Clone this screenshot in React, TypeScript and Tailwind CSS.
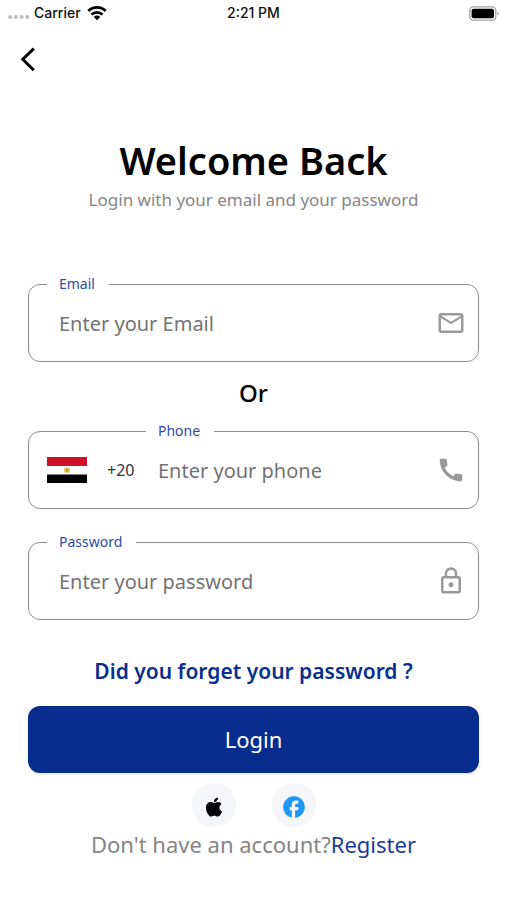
import type { ReactNode } from "react";
import { FaApple } from "react-icons/fa";
import { MdCall, MdFacebook, MdLockOutline, MdMailOutline } from "react-icons/md";

function StatusBar() {
  return (
    <header className="grid h-[26px] grid-cols-3 items-center px-2 font-['Inter',sans-serif] text-sm font-medium text-[#111111]">
      <div className="flex items-center gap-1">
        <svg viewBox="0 0 22 14" className="h-[14px] w-[22px] fill-[#bdbdbd]" aria-hidden="true">
          <circle cx="2.2" cy="11" r="2" />
          <circle cx="7.9" cy="11" r="2" />
          <circle cx="13.6" cy="11" r="2" />
          <circle cx="19.3" cy="11" r="2" />
        </svg>
        <span>Carrier</span>
        <svg viewBox="0 0 20 16" className="ml-0.5 h-4 w-5" fill="none" stroke="#000" strokeWidth="2.7" aria-hidden="true">
          <path d="M1.3 6a12.3 12.3 0 0 1 17.4 0" />
          <path d="M4.5 9.6a7.7 7.7 0 0 1 11 0" />
          <path d="M6.8 12a4.4 4.4 0 0 1 6.4 0L10 15.2Z" fill="#000" stroke="none" />
        </svg>
      </div>
      <span className="text-center">2:21 PM</span>
      <svg viewBox="0 0 30 15" className="h-[15px] w-[30px] justify-self-end" aria-label="Battery full">
        <rect x="0.8" y="0.8" width="26" height="13.4" rx="3.6" fill="none" stroke="#a3a3a3" strokeWidth="1.3" />
        <rect x="2.6" y="2.8" width="22.4" height="9.4" rx="2" />
        <path d="M28.4 5.4v4.2q1.3-.6 1.3-2.1t-1.3-2.1Z" fill="#999" />
      </svg>
    </header>
  );
}

function EgyptFlag() {
  return (
    <svg viewBox="0 0 40 26" className="h-[26px] w-10 shrink-0" aria-label="Egypt">
      <rect width="40" height="26" fill="#fff" />
      <rect width="40" height="9" fill="#ce1126" />
      <rect y="17.5" width="40" height="8.5" fill="#000" />
      <path d="M17 10.8h2l1-.6 1 .6h2v4l-1.4 1h-3.2l-1.4-1Z" fill="#e3c56c" />
      <path d="M19 12h2v2.4h-2Z" fill="#c09300" />
    </svg>
  );
}

type FieldProps = {
  id: string;
  label: string;
  type: string;
  placeholder: string;
  icon: ReactNode;
  prefix?: ReactNode;
};

function Field({ id, label, type, placeholder, icon, prefix }: FieldProps) {
  return (
    <fieldset className="min-w-0 rounded-xl border border-[#8c8c8c] pr-3 pb-[7px] pl-[18px]">
      <legend className={`h-4 pr-[14px] pl-3 text-sm leading-4 text-[#2f4ba5] ${prefix ? "ml-[99px]" : ""}`}>
        <label htmlFor={id}>{label}</label>
      </legend>
      <div className="flex h-[62px] items-center">
        {prefix}
        <input
          id={id}
          type={type}
          placeholder={placeholder}
          className={`h-full min-w-0 flex-1 bg-transparent text-xl text-[#222222] outline-none placeholder:text-[#737373] ${prefix ? "pl-5" : "pl-3"}`}
        />
        <span className="text-[30px] text-[#999999]">{icon}</span>
      </div>
    </fieldset>
  );
}

export default function App() {
  return (
    <div className="min-h-screen bg-white font-['Noto_Sans',sans-serif]">
      <StatusBar />
      <nav className="flex h-[66px] items-center px-4">
        <button type="button" aria-label="Back">
          <svg viewBox="0 0 24 26" className="h-[26px] w-6" fill="none" stroke="#000" strokeWidth="3">
            <path d="M17.8 2.6 6.8 13.2l11 11" />
          </svg>
        </button>
      </nav>
      <main className="px-7 pt-11">
        <h1 className="text-center text-[38px] leading-12 font-semibold text-black">Welcome Back</h1>
        <p className="mt-1 text-center text-[17px] leading-6 text-[#858585]">Login with your email and your password</p>

        <form onSubmit={(event) => event.preventDefault()}>
          <div className="mt-16">
            <Field id="email" label="Email" type="email" placeholder="Enter your Email" icon={<MdMailOutline />} />
          </div>
          <p className="mt-[15px] mb-[14px] text-center text-2xl font-medium text-black">Or</p>
          <Field
            id="phone"
            label="Phone"
            type="tel"
            placeholder="Enter your phone"
            icon={<MdCall />}
            prefix={
              <>
                <EgyptFlag />
                <span className="w-[51px] pl-5 text-base text-[#333333]">+20</span>
              </>
            }
          />
          <div className="mt-[25px]">
            <Field id="password" label="Password" type="password" placeholder="Enter your password" icon={<MdLockOutline />} />
          </div>
          <a href="#forgot" className="mx-auto mt-[35px] block w-fit text-[21px] leading-8 font-semibold text-[#0a2f8f]">
            Did you forget your password ?
          </a>
          <button
            type="submit"
            className="mt-[19px] h-[67px] w-full rounded-xl bg-[#062d8e] text-[22px] text-white shadow-sm"
          >
            Login
          </button>
        </form>

        <div className="mt-[10px] flex justify-center gap-9">
          <button type="button" aria-label="Sign in with Apple" className="grid size-11 place-items-center rounded-full bg-[#f5f6fa] pt-1 text-[22px] text-black">
            <FaApple />
          </button>
          <button type="button" aria-label="Sign in with Facebook" className="grid size-11 place-items-center rounded-full bg-[#f5f6fa] pt-1 text-[26px] text-[#2196f3]">
            <MdFacebook />
          </button>
        </div>
        <p className="mt-px text-center text-[22px] leading-8 text-[#858585]">
          Don't have an account?
          <a href="#register" className="text-[#1a3b97]">Register</a>
        </p>
      </main>
    </div>
  );
}
